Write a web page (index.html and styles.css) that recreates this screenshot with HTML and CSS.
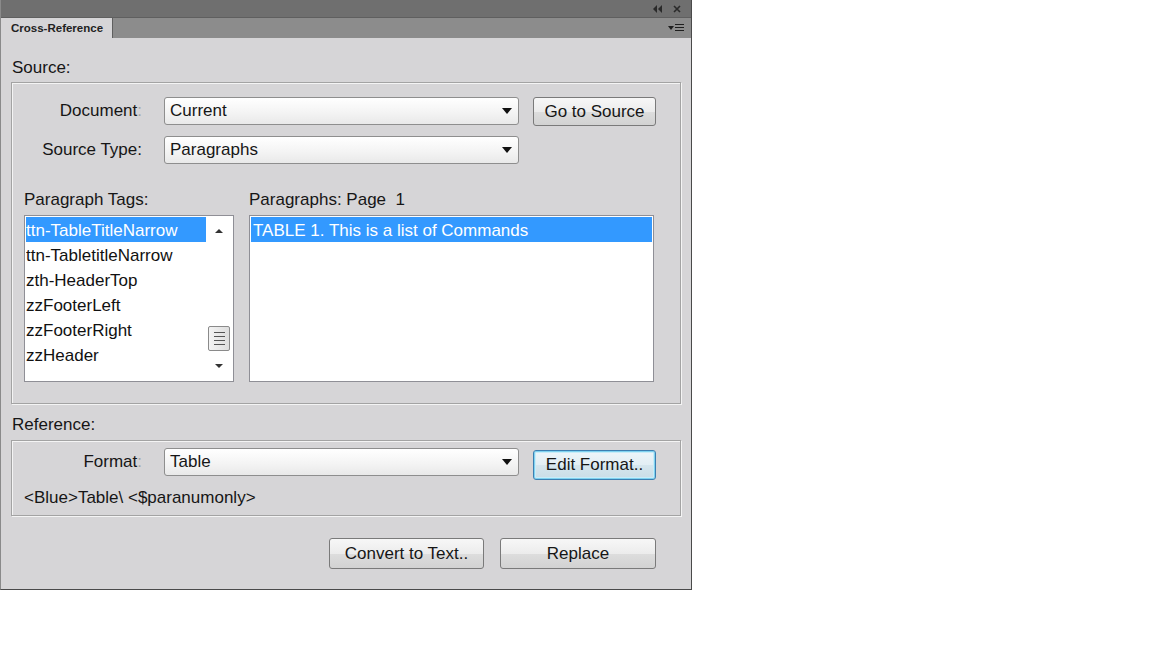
FILE: index.html
```html
<!DOCTYPE html>
<html>
<head>
<meta charset="utf-8">
<link rel="stylesheet" href="styles.css">
</head>
<body>
<div class="panel">
  <div class="titlebar">
    <svg class="tb-icon" width="12" height="10" viewBox="0 0 12 10"><path d="M5 1 L1 5 L5 9 Z M10 1 L6 5 L10 9 Z" fill="#2a2a2a"/></svg>
    <svg class="tb-icon" width="10" height="10" viewBox="0 0 10 10"><path d="M2 2 L8 8 M8 2 L2 8" stroke="#2a2a2a" stroke-width="1.6"/></svg>
  </div>
  <div class="tabrow">
    <div class="tab">Cross-Reference</div>
    <svg class="menu-icon" width="17" height="10" viewBox="0 0 17 10"><path d="M0 3 L6 3 L3 7 Z" fill="#1e1e1e"/><path d="M7 1.5 H16 M7 4.5 H16 M7 7.5 H16" stroke="#1e1e1e" stroke-width="1.2"/></svg>
  </div>
  <div class="content">
    <div class="section-label">Source:</div>
    <div class="group source-group">
      <div class="row">
        <div class="field-label">Document<span class="colon">:</span></div>
        <div class="select"><span>Current</span><i class="arrow"></i></div>
        <button class="btn btn-side">Go to Source</button>
      </div>
      <div class="row row2">
        <div class="field-label">Source Type:</div>
        <div class="select"><span>Paragraphs</span><i class="arrow"></i></div>
      </div>
      <div class="lists">
        <div class="col col-tags">
          <div class="list-label">Paragraph Tags:</div>
          <div class="listbox tags-box">
            <div class="items">
              <div class="item selected">ttn-TableTitleNarrow</div>
              <div class="item">ttn-TabletitleNarrow</div>
              <div class="item">zth-HeaderTop</div>
              <div class="item">zzFooterLeft</div>
              <div class="item">zzFooterRight</div>
              <div class="item">zzHeader</div>
            </div>
            <div class="scrollbar">
              <svg class="sb-arrow" width="10" height="6" viewBox="0 0 10 6"><path d="M1 5 L5 1 L9 5 Z" fill="#333"/></svg>
              <div class="sb-track">
                <div class="thumb"><span></span><span></span><span></span><span></span></div>
              </div>
              <svg class="sb-arrow" width="10" height="6" viewBox="0 0 10 6"><path d="M1 1 L5 5 L9 1 Z" fill="#333"/></svg>
            </div>
          </div>
        </div>
        <div class="col col-paras">
          <div class="list-label">Paragraphs: Page&nbsp; 1</div>
          <div class="listbox paras-box">
            <div class="item selected wide">TABLE 1. This is a list of Commands</div>
          </div>
        </div>
      </div>
    </div>
    <div class="section-label ref-label">Reference:</div>
    <div class="group ref-group">
      <div class="row">
        <div class="field-label">Format<span class="colon">:</span></div>
        <div class="select"><span>Table</span><i class="arrow"></i></div>
        <button class="btn btn-side btn-focus">Edit Format..</button>
      </div>
      <div class="format-text">&lt;Blue&gt;Table\ &lt;$paranumonly&gt;</div>
    </div>
    <div class="actions">
      <button class="btn btn-convert">Convert to Text..</button>
      <button class="btn btn-replace">Replace</button>
    </div>
  </div>
</div>
</body>
</html>
```
FILE: styles.css
```css
html, body {
  margin: 0;
  padding: 0;
  background: #ffffff;
}
body {
  font-family: "Liberation Sans", Arial, sans-serif;
  font-size: 17px;
  color: #161616;
}
.panel {
  width: 690px;
  height: 589px;
  background: #d6d5d7;
  border-left: 1px solid #8a8a8a;
  border-right: 1px solid #4a4a4a;
  border-bottom: 1px solid #4a4a4a;
  display: flex;
  flex-direction: column;
}
.titlebar {
  height: 17px;
  background: #6f6f6f;
  display: flex;
  justify-content: flex-end;
  align-items: center;
  gap: 8px;
  padding-right: 9px;
}
.tabrow {
  height: 21px;
  background: #8c8c8c;
  border-top: 1px solid #5f5f5f;
  box-sizing: border-box;
  display: flex;
  align-items: stretch;
  justify-content: space-between;
}
.tab {
  width: 101px;
  padding-left: 10px;
  background: #d6d5d7;
  border-right: 1px solid #5f5f5f;
  font-size: 11.5px;
  font-weight: bold;
  color: #222;
  line-height: 20px;
}
.menu-icon {
  align-self: center;
  margin-right: 6px;
}
.content {
  padding: 0 10px 0 10px;
}
.section-label {
  margin-top: 20px;
  height: 20px;
  line-height: 20px;
  margin-bottom: 4px;
  padding-left: 1px;
}
.ref-label {
  margin-top: 11px;
  margin-bottom: 5px;
}
.group {
  border: 1px solid #a3a3a3;
  box-shadow: inset 1px 1px 0 #f4f4f4, 1px 1px 0 #f4f4f4;
}
.source-group {
  padding: 14px 0 21px 12px;
}
.row {
  display: flex;
  align-items: flex-start;
}
.row2 {
  margin-top: 10px;
}
.field-label {
  width: 118px;
  text-align: right;
  height: 28px;
  line-height: 28px;
  margin-right: 22px;
}
.field-label .colon {
  color: #a5a5a5;
}
.select {
  height: 26px;
  border: 1px solid #8e8e8e;
  border-radius: 3px;
  background: linear-gradient(#ffffff, #f4f4f4 55%, #e9e9e9);
  display: flex;
  align-items: center;
  justify-content: space-between;
  padding-left: 5px;
  width: 348px;
}
.select span {
  line-height: 26px;
}
.arrow {
  width: 0;
  height: 0;
  border-left: 5.5px solid transparent;
  border-right: 5.5px solid transparent;
  border-top: 6px solid #111;
  margin-right: 6px;
}
.btn {
  font-family: "Liberation Sans", Arial, sans-serif;
  font-size: 17px;
  color: #161616;
  border: 1px solid #7a7a7a;
  border-radius: 3px;
  background: linear-gradient(#f7f7f7, #ececec 50%, #dddddd 51%, #d2d2d2);
  padding: 0;
  box-sizing: border-box;
}
.btn-side {
  margin-left: 14px;
  width: 123px;
  height: 29px;
}
.btn-focus {
  margin-top: 2px;
  height: 30px;
  border-color: #3c7fb1;
  box-shadow: inset 0 0 0 1px #7fd2f0, inset 0 0 0 2px #c9ecf8;
  background: linear-gradient(#eef6fa, #e2eef4 50%, #d5e6ee 51%, #cadde6);
}
.lists {
  display: flex;
  gap: 15px;
  margin-top: 26px;
}
.list-label {
  height: 20px;
  line-height: 20px;
  margin-bottom: 5px;
}
.col-tags { width: 210px; }
.col-paras { width: 405px; }
.listbox {
  height: 167px;
  box-sizing: border-box;
  background: #ffffff;
  border: 1px solid #8f8f96;
  padding: 1px;
}
.tags-box {
  display: flex;
}
.items {
  width: 180px;
}
.item {
  height: 25px;
  line-height: 27px;
  white-space: nowrap;
  color: #111;
  overflow: hidden;
}
.item.selected {
  background: #3399ff;
  color: #ffffff;
}
.wide {
  padding-left: 2px;
}
.scrollbar {
  width: 26px;
  display: flex;
  flex-direction: column;
  align-items: center;
  padding-top: 11px;
  padding-bottom: 11px;
  box-sizing: border-box;
  height: 163px;
}
.sb-arrow {
  flex: none;
}
.sb-track {
  flex: 1;
  width: 100%;
  display: flex;
  align-items: flex-end;
  justify-content: center;
  padding-bottom: 12px;
}
.thumb {
  width: 22px;
  height: 25px;
  box-sizing: border-box;
  border: 1px solid #8a8a8a;
  border-radius: 2px;
  background: linear-gradient(90deg, #f3f3f3, #dedede);
  display: flex;
  flex-direction: column;
  align-items: center;
  justify-content: center;
  gap: 3px;
}
.thumb span {
  display: block;
  width: 11px;
  height: 1px;
  background: #555;
}
.ref-group {
  padding: 7px 0 7px 12px;
}
.format-text {
  margin-top: 8px;
  height: 20px;
  line-height: 20px;
}
.actions {
  display: flex;
  justify-content: flex-end;
  gap: 16px;
  margin-top: 22px;
  padding-right: 25px;
}
.btn-convert {
  width: 155px;
  height: 31px;
}
.btn-replace {
  width: 156px;
  height: 31px;
}
```
